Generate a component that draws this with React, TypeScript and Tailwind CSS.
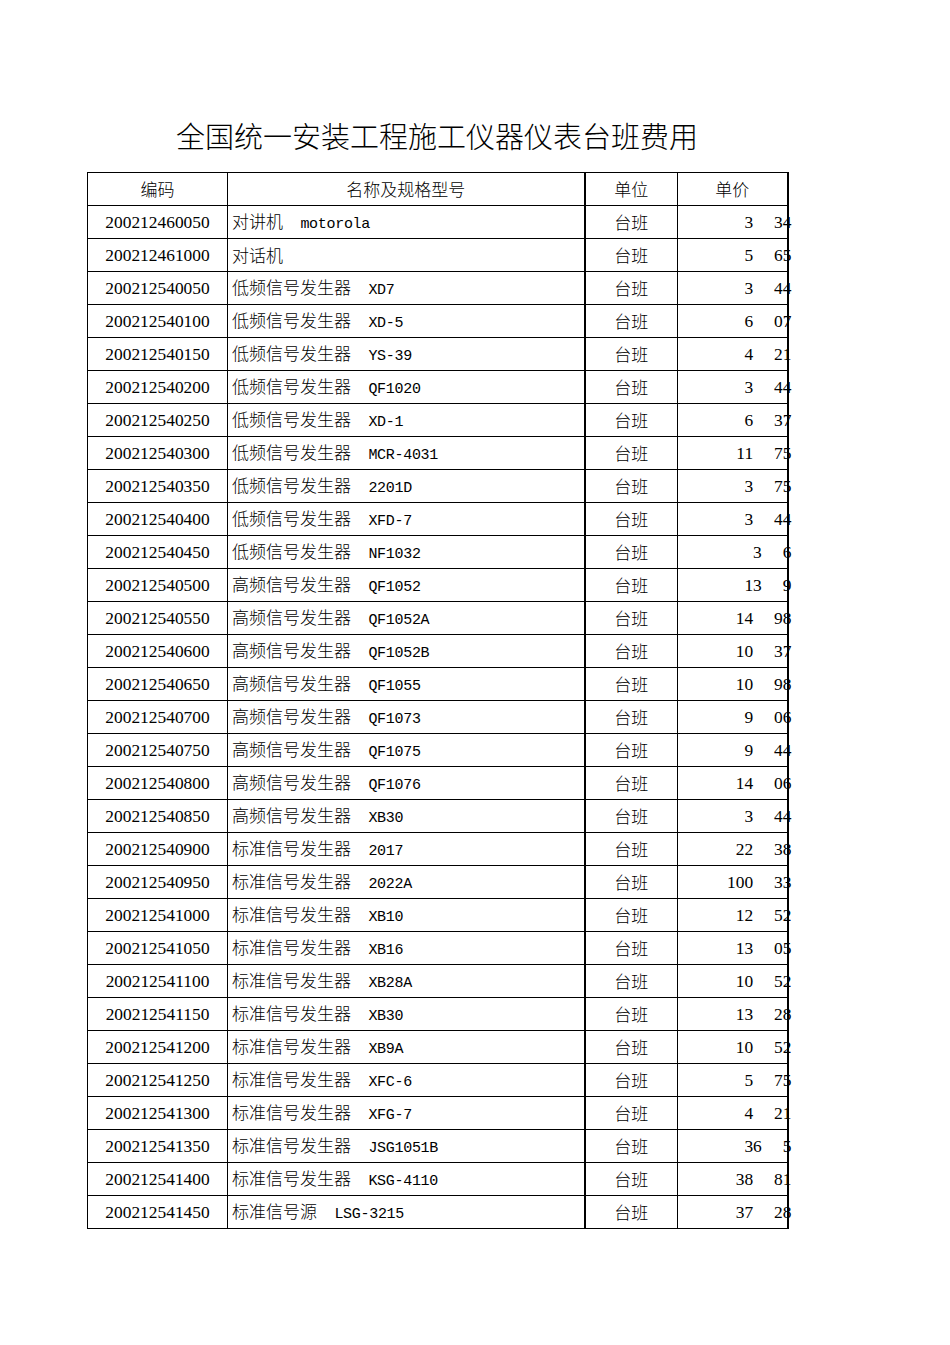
import React from 'react';

interface Row {
  code: string;
  name: string;
  model: string;
  whole: string;
  frac: string;
}

const cjk = '"Noto Sans CJK SC", "Noto Sans", sans-serif';

const rows: Row[] = [
  { code: '200212460050', name: '对讲机', model: 'motorola', whole: '3', frac: '34' },
  { code: '200212461000', name: '对话机', model: '', whole: '5', frac: '65' },
  { code: '200212540050', name: '低频信号发生器', model: 'XD7', whole: '3', frac: '44' },
  { code: '200212540100', name: '低频信号发生器', model: 'XD-5', whole: '6', frac: '07' },
  { code: '200212540150', name: '低频信号发生器', model: 'YS-39', whole: '4', frac: '21' },
  { code: '200212540200', name: '低频信号发生器', model: 'QF1020', whole: '3', frac: '44' },
  { code: '200212540250', name: '低频信号发生器', model: 'XD-1', whole: '6', frac: '37' },
  { code: '200212540300', name: '低频信号发生器', model: 'MCR-4031', whole: '11', frac: '75' },
  { code: '200212540350', name: '低频信号发生器', model: '2201D', whole: '3', frac: '75' },
  { code: '200212540400', name: '低频信号发生器', model: 'XFD-7', whole: '3', frac: '44' },
  { code: '200212540450', name: '低频信号发生器', model: 'NF1032', whole: '3', frac: '6' },
  { code: '200212540500', name: '高频信号发生器', model: 'QF1052', whole: '13', frac: '9' },
  { code: '200212540550', name: '高频信号发生器', model: 'QF1052A', whole: '14', frac: '98' },
  { code: '200212540600', name: '高频信号发生器', model: 'QF1052B', whole: '10', frac: '37' },
  { code: '200212540650', name: '高频信号发生器', model: 'QF1055', whole: '10', frac: '98' },
  { code: '200212540700', name: '高频信号发生器', model: 'QF1073', whole: '9', frac: '06' },
  { code: '200212540750', name: '高频信号发生器', model: 'QF1075', whole: '9', frac: '44' },
  { code: '200212540800', name: '高频信号发生器', model: 'QF1076', whole: '14', frac: '06' },
  { code: '200212540850', name: '高频信号发生器', model: 'XB30', whole: '3', frac: '44' },
  { code: '200212540900', name: '标准信号发生器', model: '2017', whole: '22', frac: '38' },
  { code: '200212540950', name: '标准信号发生器', model: '2022A', whole: '100', frac: '33' },
  { code: '200212541000', name: '标准信号发生器', model: 'XB10', whole: '12', frac: '52' },
  { code: '200212541050', name: '标准信号发生器', model: 'XB16', whole: '13', frac: '05' },
  { code: '200212541100', name: '标准信号发生器', model: 'XB28A', whole: '10', frac: '52' },
  { code: '200212541150', name: '标准信号发生器', model: 'XB30', whole: '13', frac: '28' },
  { code: '200212541200', name: '标准信号发生器', model: 'XB9A', whole: '10', frac: '52' },
  { code: '200212541250', name: '标准信号发生器', model: 'XFC-6', whole: '5', frac: '75' },
  { code: '200212541300', name: '标准信号发生器', model: 'XFG-7', whole: '4', frac: '21' },
  { code: '200212541350', name: '标准信号发生器', model: 'JSG1051B', whole: '36', frac: '5' },
  { code: '200212541400', name: '标准信号发生器', model: 'KSG-4110', whole: '38', frac: '81' },
  { code: '200212541450', name: '标准信号源', model: 'LSG-3215', whole: '37', frac: '28' },
];

const App: React.FC = () => {
  return (
    <div className="min-h-screen bg-white text-black font-light" style={{ fontFamily: cjk }}>
      <div className="pt-[116px] pl-[87px]">
        <h1 className="w-[700px] text-center text-[29px] leading-[38px] font-light">
          全国统一安装工程施工仪器仪表台班费用
        </h1>

        <table className="mt-[18px] w-[700px] table-fixed border-collapse text-[17px]">
          <colgroup>
            <col className="w-[140px]" />
            <col className="w-[357px]" />
            <col className="w-[93px]" />
            <col className="w-[110px]" />
          </colgroup>
          <thead>
            <tr className="h-[33px]">
              <th className="border border-black font-light text-center p-0">编码</th>
              <th className="border border-black border-r-2 font-light text-center p-0">名称及规格型号</th>
              <th className="border border-black font-light text-center p-0">单位</th>
              <th className="border border-black border-r-2 font-light text-center p-0">单价</th>
            </tr>
          </thead>
          <tbody>
            {rows.map((r) => (
              <tr key={r.code} className="h-[33px]">
                <td
                  className="border border-black text-center p-0 text-[17.4px] font-normal"
                  style={{ fontFamily: '"Liberation Serif", serif' }}
                >
                  {r.code}
                </td>
                <td className="border border-black border-r-2 p-0 pl-[4px] whitespace-pre">
                  {r.name}
                  {r.model && (
                    <span
                      className="text-[15px] tracking-[-0.3px] font-normal"
                      style={{ fontFamily: '"Liberation Mono", monospace' }}
                    >
                      {'  ' + r.model}
                    </span>
                  )}
                </td>
                <td className="border border-black text-center p-0">台班</td>
                <td className="border border-black border-r-2 p-0 overflow-visible">
                  <div
                    className="flex justify-end mr-[-5px] text-[17.4px] font-normal"
                    style={{ fontFamily: '"Liberation Serif", serif' }}
                  >
                    <span>{r.whole}</span>
                    <span className="ml-[21px]">{r.frac}</span>
                  </div>
                </td>
              </tr>
            ))}
          </tbody>
        </table>
      </div>
    </div>
  );
};

export default App;
